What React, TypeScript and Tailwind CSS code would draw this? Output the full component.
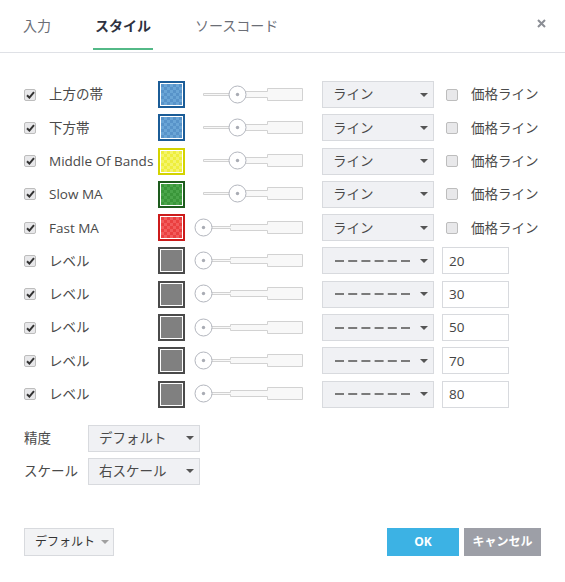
import React from 'react';

type Row = {
  label: string;
  swatch: 'blue' | 'yellow' | 'green' | 'red' | 'gray';
  thumbAt: number;
  level?: string;
};

const rows: Row[] = [
  { label: '上方の帯', swatch: 'blue', thumbAt: 34 },
  { label: '下方帯', swatch: 'blue', thumbAt: 34 },
  { label: 'Middle Of Bands', swatch: 'yellow', thumbAt: 34 },
  { label: 'Slow MA', swatch: 'green', thumbAt: 34 },
  { label: 'Fast MA', swatch: 'red', thumbAt: 0 },
  { label: 'レベル', swatch: 'gray', thumbAt: 0, level: '20' },
  { label: 'レベル', swatch: 'gray', thumbAt: 0, level: '30' },
  { label: 'レベル', swatch: 'gray', thumbAt: 0, level: '50' },
  { label: 'レベル', swatch: 'gray', thumbAt: 0, level: '70' },
  { label: 'レベル', swatch: 'gray', thumbAt: 0, level: '80' },
];

// full class names per colour so Tailwind picks them up
const swatchBorder: Record<Row['swatch'], string> = {
  blue: 'border-[#1b5c97]',
  yellow: 'border-[#d3d300]',
  green: 'border-[#1d5b1d]',
  red: 'border-[#cc1b1b]',
  gray: 'border-[#4a4a4a]',
};

const swatchFill: Record<Row['swatch'], string> = {
  blue: 'bg-[image:repeating-conic-gradient(#6aa5d6_0%_25%,#5893c9_0%_50%)] bg-size-[6px_6px]',
  yellow: 'bg-[image:repeating-conic-gradient(#f4f46a_0%_25%,#eeee3c_0%_50%)] bg-size-[6px_6px]',
  green: 'bg-[image:repeating-conic-gradient(#4aa54a_0%_25%,#3a963a_0%_50%)] bg-size-[6px_6px]',
  red: 'bg-[image:repeating-conic-gradient(#f25b5b_0%_25%,#ea3f3f_0%_50%)] bg-size-[6px_6px]',
  gray: 'bg-[#808080]',
};

const Check = ({ checked }: { checked: boolean }) => (
  <div className="w-[12px] h-[12px] shrink-0 rounded-[2px] border border-[#bdbdbd] bg-[#e8e8ea] flex items-center justify-center">
    {checked && (
      <svg width="9" height="8" viewBox="0 0 9 8">
        <path d="M1 4.2 L3.4 6.6 L8 1.2" fill="none" stroke="#333" strokeWidth="2" />
      </svg>
    )}
  </div>
);

const Arrow = ({ light }: { light?: boolean }) => (
  <svg width="8" height="4" viewBox="0 0 8 4" className="shrink-0">
    <path d="M0 0 H8 L4 4 Z" fill={light ? '#a0a0a0' : '#555'} />
  </svg>
);

const Slider = ({ thumbAt }: { thumbAt: number }) => (
  <svg width="112" height="20" viewBox="0 0 112 20" className="shrink-0">
    <path
      d="M11.5 8.5 H38.5 V6.5 H75.5 V3.5 H110.5 V15.5 H75.5 V12.5 H38.5 V10.5 H11.5 Z"
      fill="#f8f8f8"
      stroke="#d2d2d2"
    />
    <circle cx={11.5 + thumbAt} cy="9.5" r="8.5" fill="#fff" stroke="#b3b6be" />
    <circle cx={11.5 + thumbAt} cy="9.5" r="1.7" fill="#a9acb4" />
  </svg>
);

const Select = ({ children }: { children: React.ReactNode }) => (
  <div className="w-[112px] h-[27px] shrink-0 bg-[#f0f1f4] border border-[#d8dade] flex items-center justify-between pl-[10px] pr-[5px] text-[#4a4a4a]">
    {children}
    <Arrow />
  </div>
);

const Dashes = () => (
  <svg width="75" height="2" viewBox="0 0 75 2">
    <line x1="0" y1="1" x2="75" y2="1" stroke="#7a7a7a" strokeWidth="2" strokeDasharray="9 4.2" />
  </svg>
);

export default function App() {
  return (
    <div className="w-[565px] h-[582px] bg-white font-['Open_Sans','Noto_Sans_CJK_JP',sans-serif] text-[13.5px] text-[#4a4a4a] flex flex-col">
      {/* tabs */}
      <div className="h-[53px] border-b border-[#dfe1e6] flex items-stretch pl-[23px] pr-[19px] shrink-0">
        <div className="h-[53px] -mb-px flex items-center pb-[3px] gap-[42px] text-[14px]">
          <span className="text-[#6b6e76]">入力</span>
          <span className="h-full flex items-center px-[2px] font-bold text-[#2e3140] border-b-2 border-[#53b987] pt-[3px]">スタイル</span>
          <span className="text-[#6b6e76]">ソースコード</span>
        </div>
        <div className="ml-auto flex items-center pb-[5px]">
          <svg width="9" height="9" viewBox="0 0 9 9">
            <path d="M1 1 L8 8 M8 1 L1 8" stroke="#8b8e95" strokeWidth="2" />
          </svg>
        </div>
      </div>

      {/* style rows */}
      <div className="pt-[28px] pl-[24px] flex flex-col gap-[6.3px]">
        {rows.map((r, i) => (
          <div key={i} className="h-[27px] flex items-center">
            <Check checked />
            <span className="ml-[13px] w-[109px] shrink-0 whitespace-nowrap">{r.label}</span>
            <div className={`w-[27px] h-[27px] shrink-0 border-2 ${swatchBorder[r.swatch]} p-px bg-white`}>
              <div className={`w-full h-full ${swatchFill[r.swatch]}`} />
            </div>
            <div className="ml-[7px]">
              <Slider thumbAt={r.thumbAt} />
            </div>
            <div className="ml-[18px]">
              {r.level ? (
                <Select>
                  <span className="pl-[2px] flex"><Dashes /></span>
                </Select>
              ) : (
                <Select>
                  <span>ライン</span>
                </Select>
              )}
            </div>
            {r.level ? (
              <div className="ml-[8px] w-[67px] h-[27px] border border-[#d8dade] bg-white flex items-center pl-[6px] text-[#444]">
                {r.level}
              </div>
            ) : (
              <div className="ml-[12px] flex items-center">
                <Check checked={false} />
                <span className="ml-[13px] whitespace-nowrap">価格ライン</span>
              </div>
            )}
          </div>
        ))}
      </div>

      {/* precision / scale */}
      <div className="pt-[17px] pl-[24px] flex flex-col gap-[6px]">
        <div className="h-[27px] flex items-center">
          <span className="w-[64px] shrink-0">精度</span>
          <Select>
            <span>デフォルト</span>
          </Select>
        </div>
        <div className="h-[27px] flex items-center">
          <span className="w-[64px] shrink-0">スケール</span>
          <Select>
            <span>右スケール</span>
          </Select>
        </div>
      </div>

      {/* footer */}
      <div className="mt-[43px] px-[24px] flex items-center">
        <div className="w-[90px] h-[28px] border border-[#d8dade] bg-[#f2f3f5] flex items-center pl-[10px] gap-[6px] text-[12px] text-[#333]">
          <span>デフォルト</span>
          <Arrow light />
        </div>
        <div className="ml-auto flex gap-[5px]">
          <div className="w-[72px] h-[28px] bg-[#3cb2e4] text-white font-bold text-[12px] flex items-center justify-center">
            OK
          </div>
          <div className="w-[77px] h-[28px] bg-[#9d9fa7] text-white font-bold text-[12px] flex items-center justify-center">
            キャンセル
          </div>
        </div>
      </div>
    </div>
  );
}
